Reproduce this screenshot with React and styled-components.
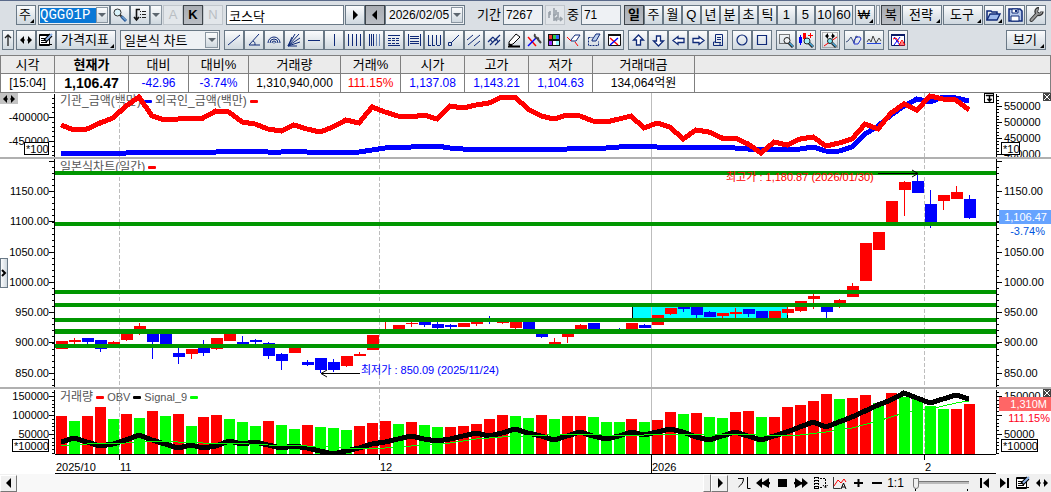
import React from 'react';
import styled, { createGlobalStyle, css } from 'styled-components';

const NAVY = '#0f2a78';
const RED = '#ff0000';
const BLUE = '#0000ff';
const GREEN = '#009600';
const LIME = '#00ff00';

/* ---------- data ---------- */

const quotes = [
  { name: '시각', value: '[15:04]', width: 54 },
  { name: '현재가', value: '1,106.47', width: 74, bold: true },
  { name: '대비', value: '-42.96', width: 60, color: BLUE },
  { name: '대비%', value: '-3.74%', width: 60, color: BLUE },
  { name: '거래량', value: '1,310,940,000', width: 92 },
  { name: '거래%', value: '111.15%', width: 60, color: RED },
  { name: '시가', value: '1,137.08', width: 64, color: BLUE },
  { name: '고가', value: '1,143.21', width: 64, color: BLUE },
  { name: '저가', value: '1,104.63', width: 64, color: BLUE },
  { name: '거래대금', value: '134,064억원', width: 102 },
];

const periods = ['일', '주', '월', 'Q', '년', '분', '초', '틱', '1', '5', '10', '60'];

const drawTools = [
  ['line', '추세선'], ['angle', '각도선'], ['arcs', '피보나치 아크'], ['fan', '피보나치 팬'],
  ['hline', '수평선'], ['vline', '수직선'], ['vlines', '시간대'], ['vlinesDense', '피보나치 시간대'],
  ['rows', '되돌림'], ['rowsFramed', '등분선'], ['cycle', '사이클'], ['segment', '선분'],
  ['parallel', '평행선'], ['hash', '채널'], ['pencil', '펜'], ['cross', '선 설정'],
  ['palette', '색상'], ['eraser', '지우기'], ['eraserAll', '영역 지우기'], ['closeWin', '모두 지우기'],
];
const arrowTools = [['up', '위'], ['down', '아래'], ['left', '왼쪽'], ['right', '오른쪽'], ['note', '메모']];

// canvas y values: body top, body bottom, wick top, wick bottom, r(ise) or f(all)
const candles = [
  [341, 349, 341, 349, 'r'], [340, 342, 338, 344, 'r'], [338, 342, 338, 344, 'f'], [340, 349, 340, 352, 'f'],
  [342, 345, 341, 345, 'r'], [331, 340, 331, 341, 'r'], [326, 331, 323, 335, 'r'], [332, 342, 332, 359, 'f'],
  [332, 345, 332, 345, 'f'], [353, 357, 346, 364, 'f'], [349, 354, 349, 359, 'r'], [347, 353, 340, 356, 'f'],
  [338, 349, 338, 350, 'r'], [333, 341, 333, 341, 'r'], [342, 344, 336, 345, 'f'], [340, 342, 339, 344, 'f'],
  [343, 356, 342, 359, 'f'], [354, 361, 353, 370, 'f'], [347, 353, 346, 353, 'r'], [362, 365, 360, 366, 'f'],
  [358, 370, 358, 373, 'f'], [362, 370, 359, 372, 'f'], [356, 366, 356, 367, 'r'], [354, 356, 352, 356, 'r'],
  [335, 350, 335, 350, 'r'], [330, 332, 321, 332, 'r'], [325, 330, 325, 330, 'r'], [323, 324, 321, 327, 'r'],
  [321, 325, 321, 327, 'f'], [324, 328, 321, 330, 'f'], [325, 327, 324, 330, 'f'], [323, 327, 323, 327, 'r'],
  [320, 324, 320, 326, 'r'], [320, 321, 316, 324, 'f'], [320, 323, 320, 324, 'r'], [320, 328, 320, 330, 'r'],
  [321, 331, 321, 331, 'f'], [332, 337, 332, 338, 'f'], [342, 345, 338, 345, 'r'], [332, 337, 332, 343, 'r'],
  [325, 330, 324, 330, 'r'], [323, 330, 323, 330, 'f'], [330, 332, 330, 332, 'f'], [330, 332, 328, 332, 'f'],
  [323, 330, 323, 330, 'r'], [325, 328, 324, 328, 'f'], [315, 325, 315, 325, 'r'], [308, 314, 308, 315, 'r'],
  [305, 309, 305, 312, 'f'], [305, 315, 305, 318, 'f'], [312, 317, 311, 317, 'f'], [313, 316, 313, 318, 'r'],
  [312, 314, 308, 318, 'r'], [309, 314, 309, 317, 'f'], [311, 319, 311, 319, 'f'], [311, 319, 311, 319, 'r'],
  [309, 313, 307, 315, 'r'], [301, 311, 301, 312, 'r'], [296, 299, 293, 309, 'r'], [306, 312, 306, 318, 'f'],
  [300, 304, 299, 308, 'r'], [286, 297, 283, 297, 'r'], [243, 281, 243, 281, 'r'], [232, 250, 232, 250, 'r'],
  [201, 223, 201, 223, 'r'], [182, 190, 181, 216, 'r'], [181, 193, 173, 193, 'f'], [204, 224, 190, 228, 'f'],
  [195, 201, 195, 210, 'r'], [192, 199, 186, 199, 'r'], [199, 218, 195, 219, 'f'],
];

const volumeTops = [
  416, 421, 416, 407, 419, 414, 418, 411, 416, 414, 426, 417, 415, 419, 422, 426, 421, 425, 429, 425, 427, 428, 430, 426,
  423, 421, 424, 422, 425, 427, 427, 426, 424, 419, 415, 416, 418, 415, 419, 416, 416, 417, 422, 422, 419, 422, 420, 412,
  414, 413, 417, 418, 412, 411, 417, 417, 407, 405, 401, 394, 399, 398, 395, 403, 393, 397, 398, 406, 409, 409, 404,
];
const volumeSigns = 'RGRRGRGRGRGRRGGGRGGRGGGRRRGRGGRRRRRGGRGRRGGGRGRRGRGGRRGRRRRRGRRGRGGGGRR';

const institution = [
  152, 152, 152, 153, 152, 152, 151, 151, 151, 151, 151, 151, 151, 150, 151, 150, 151, 151, 150, 151, 151, 151, 151, 151,
  149, 147, 146, 146, 145, 145, 147, 148, 148, 148, 148, 148, 148, 148, 148, 148, 147, 147, 147, 146, 145, 145, 146, 146,
  146, 146, 146, 146, 147, 148, 148, 148, 148, 148, 146, 150, 150, 146, 133, 125, 114, 105, 98, 101, 96, 97, 100,
];
const foreigner = [
  125, 130, 129, 123, 118, 106, 97, 116, 120, 119, 118, 118, 111, 112, 122, 124, 129, 131, 125, 129, 132, 127, 120, 123,
  107, 112, 116, 117, 115, 119, 106, 108, 105, 103, 97, 97, 109, 116, 119, 115, 116, 121, 122, 119, 116, 128, 123, 127,
  139, 130, 132, 138, 138, 144, 153, 142, 145, 139, 137, 146, 143, 139, 124, 129, 113, 104, 110, 96, 99, 100, 110,
];
const obv = [
  442, 438, 442, 446, 444, 440, 435, 440, 444, 448, 445, 448, 446, 441, 444, 442, 445, 448, 446, 448, 451, 454, 451, 448,
  444, 442, 439, 436, 439, 441, 439, 436, 433, 436, 433, 429, 433, 436, 440, 436, 432, 436, 439, 436, 432, 435, 432, 429,
  432, 437, 440, 436, 432, 436, 440, 436, 432, 427, 422, 427, 422, 417, 411, 405, 400, 393, 398, 403, 399, 395, 399,
];
const signal = [
  [0, 446], [2, 444], [5, 443], [7, 441], [9, 442], [11, 443], [13, 443], [16, 445], [19, 446], [21, 447], [22, 448],
  [25, 448], [27, 446], [30, 443], [32, 439], [34, 437], [36, 436], [39, 434], [41, 434], [43, 436], [45, 435],
  [47, 434], [52, 434], [54, 435], [57, 435], [59, 432], [61, 428], [63, 421], [65, 413], [67, 409], [69, 403], [70, 401],
];

const levels = [[171, 4], [222, 4], [290, 4], [303, 4], [318, 4], [329, 5], [344, 4]];

const AXIS_W = 55;
const slotX = (i) => Math.floor(56.3 + i * 12.97);
const points = (values) => values.map((y, i) => `${slotX(i) + 5},${y}`).join(' ');

/* ---------- icons ---------- */

const s = (color = NAVY, width = 1) => ({ stroke: color, strokeWidth: width, fill: 'none' });

const icons = {
  search: <><circle cx="5.5" cy="5.5" r="3.5" {...s('#333')} fill="#d9f3fa" /><path d="M8 8l2 2" {...s('#333', 2)} /><path d="M9.500 9.500l4.500 4.500" {...s('#2a5a9a', 3)} /><path d="M10 9.500l4 4" {...s('#9fd0f0')} /></>,
  sortList: <><path d="M8 2.500H4.500V13M2 10l2.500 3L7 10" {...s('#111', 1.6)} /><path d="M8 4.500h1M10 4.500h4M8 7.500h1M10 7.500h4M8 10.500h1M10 10.500h4" {...s('#222')} /></>,
  play: <path d="M6 3l5 5-5 5z" fill="#000" />,
  back: <path d="M10 3L5 8l5 5z" fill="#000" />,
  dimBars: <path d="M2 5v6M3 4v4M7 1v13M9 3v5M6 8h3M11 5v6M8 12h7M10 10l-2 2 2 2M13 10l2 2-2 2" {...s('#9aa2aa', 1.6)} />,
  folder: <><path d="M2 13V4h4l1 1h5v3" {...s(NAVY, 1.5)} /><path d="M2 13l3-6h10l-3 6z" {...s(NAVY, 1.3)} fill="#9db9ec" /></>,
  save: <><path d="M2 2h11l2 2v10H2z" {...s(NAVY, 1.5)} fill="#b8caec" /><path d="M5 2v4h6V2z" fill="#fff" stroke={NAVY} /><path d="M9 3v2" {...s(NAVY, 2)} /><path d="M4 14V9h8v5z" fill="#fff" stroke={NAVY} /></>,
  wrench: <><path d="M3.500 13l6-6.500" {...s('#333', 4)} strokeLinecap="round" /><path d="M14 4.500a3 3 0 1 1-3-3" {...s('#333', 3.4)} /><path d="M3.500 13l6-6.500" {...s('#9a9a9a', 2)} strokeLinecap="round" /><path d="M13.500 5a2.600 2.600 0 1 1-3-3" {...s('#9a9a9a', 1.4)} /></>,
  upThin: <path d="M8 14V3M5 6l3-3 3 3" {...s('#222', 1.3)} />,
  leftRight: <><path d="M6 4L2 8l4 4zM10 4l4 4-4 4z" fill="#000" /><path d="M4 8h3M9 8h3" {...s('#000')} /></>,
  sheetPen: <><path d="M1.500 2.500h10v11h-10z" fill="#fff" stroke="#000" /><path d="M2 3.500h9M3 6.500h5M3 8.500h4M3 10.500h6M2 12.500h12" {...s('#000')} /><path d="M7 9l6-6" {...s('#000', 4)} /><path d="M8 8l6-6" {...s('#8fb4e8', 2)} /></>,
  line: <path d="M2 13L14 3" {...s()} />,
  angle: <path d="M13 2L3 13h11M7 9c2 1 2 2 2 4" {...s()} />,
  arcs: <path d="M2 11a6 6 0 0 1 12 0M4 11a4 4 0 0 1 8 0M6 11a2 2 0 0 1 4 0M7.500 11h1" {...s()} />,
  fan: <path d="M2 14L13 2M2 14L9 2M2 14L14 6M2 14l12-4M2 14h9M2 14L6 5" {...s()} />,
  hline: <path d="M2 8.500h12" {...s()} />,
  vline: <path d="M8.500 2v12" {...s()} />,
  vlines: <path d="M2.500 2v12M6.500 2v12M10.500 2v12M14.500 2v12" {...s()} />,
  vlinesDense: <><path d="M3.500 2v12M5.500 2v12M7.500 2v12" {...s()} /><path d="M10.500 2v12M13.500 2v12" {...s('#6b87b5')} /></>,
  rows: <><path d="M2 3.500h12M2 13.500h12" {...s()} /><path d="M2 6.500h12M2 8.500h12M2 11.500h12" {...s()} strokeDasharray="3 1" /></>,
  rowsFramed: <path d="M2.500 2v12M14.500 2v12M4 4.500h9M4 6.500h9M4 9.500h9M4 11.500h9" {...s()} />,
  cycle: <path d="M2.500 3v10M6.500 3v10M10.500 3v10M14.500 3v10M2 13.500h3M6 13.500h3M11 13.500h3" {...s()} />,
  segment: <path d="M5 11l8-8M2.500 10.500h3v3h-3z" {...s()} />,
  parallel: <path d="M1 8l6-5M2 13L14 3M8 14l6-5" {...s()} />,
  hash: <path d="M2 10l5-5M4 13L14 3M9 13l5-5M4 7l3 4M7 5l3 4M10 6l2 4" {...s(NAVY, 1.2)} />,
  pencil: <><path d="M3 10L10 2l4 3-7 7-4 1z" fill="#fff" stroke="#000" /><path d="M2 14.500h12M3 12l3 2" {...s('#000', 2)} /></>,
  cross: <><path d="M2 5l8 9" {...s(RED, 1.4)} /><path d="M2 14L10 6" {...s(BLUE, 1.4)} /><path d="M10 5l5 6M9 2a3 3 0 0 0 4 4" {...s('#444', 2)} /></>,
  palette: <><rect x="2" y="2" width="12" height="12" fill="#111" /><path d="M3 3h3v4H3z" fill="#e33" /><path d="M7 3h3v4H7z" fill="#3c4" /><path d="M10 3h3v4h-3z" fill="#36f" /><path d="M3 9h3v4H3z" fill="#93f" /><path d="M7 9h3v4H7z" fill="#fff" /><path d="M10 9h3v4h-3z" fill="#9ff" /></>,
  eraser: <><path d="M5 8l4-5h5l-4 6H5z" fill="#fff" stroke={NAVY} /><path d="M1 5l4 4M9 10l3 4" {...s(RED)} /></>,
  eraserAll: <><path d="M6 8l4-6h4l-4 7H6z" fill="#bcd0ee" stroke={NAVY} /><path d="M2.500 5.500v8h10v-4M2.500 5.500h4" {...s()} strokeDasharray="2 1" /></>,
  closeWin: <><path d="M2.500 3.500h12v10h-12z" fill="#fff" stroke="#111" /><path d="M2 3h13" {...s('#111', 2)} /><path d="M4 6l8 7" {...s(RED, 1.4)} /><path d="M12 6l-8 7" {...s(BLUE, 1.4)} /></>,
  up: <path d="M8.500 3l5 5h-3v5h-4V8h-3z" {...s(NAVY, 1.3)} fill="#fff" />,
  down: <path d="M8.500 14l5-5h-3V4h-4v5h-3z" {...s(NAVY, 1.3)} fill="#fff" />,
  left: <path d="M3 8.500l5-4v2h6v4H8v2z" {...s(NAVY, 1.3)} fill="#fff" />,
  right: <path d="M14 8.500l-5-4v2H3v4h6v2z" {...s(NAVY, 1.3)} fill="#fff" />,
  note: <path d="M5.500 10V2.500h7v11h-9V10zM10 10v3.500h3M7 5.500h4M7 7.500h4M5 10.500h6" {...s()} />,
  circle: <circle cx="8" cy="8" r="5" {...s(NAVY, 1.2)} />,
  square: <path d="M3.500 3.500h9v9h-9z" {...s(NAVY, 1.2)} />,
  zoomArea: <><path d="M1.500 2.500h10v9h-10z" {...s('#000')} strokeDasharray="1 1" /><circle cx="9" cy="8.500" r="3" fill="#eef1f4" stroke="#222" /><path d="M11 11l4 4" {...s('#222', 3)} /><path d="M11.500 11l3.500 3.500" {...s('#4aa6d8', 1.6)} /></>,
  zoomCandle: <><path d="M1 5h3v6H1zM2 3h1v10H2z" fill={BLUE} /><path d="M5 1h3v6H5zM10 3h5v1h-5zM12 1h1v5h-1z" fill={RED} /><circle cx="9" cy="9" r="3" fill="#a8f0f8" stroke="#222" /><path d="M11 11l4 4" {...s('#222', 3)} /><path d="M11.500 11l3.500 3.500" {...s('#4aa6d8', 1.6)} /></>,
  zoomFit: <><path d="M.5.500h15v15H.5z" {...s('#777')} strokeDasharray="1 1" /><path d="M6 1L3 4l3 3zM10 1l3 3-3 3z" fill="#000" /><path d="M4 4h3M9 4h3" {...s('#000')} /><path d="M2 14L15 5" {...s(RED)} /><circle cx="8" cy="9" r="2.500" fill="#7fe8f4" stroke="#222" /><path d="M10 11l4 4" {...s('#222', 2.600)} /><path d="M10.500 11l3.500 3.500" {...s('#4aa6d8', 1.4)} /></>,
  waveEdit: <><path d="M0 10l2-1 3-4 3 6 2-7 2 1" {...s('#3c4f7c')} /><path d="M8 12V8l3-3h3l1 2-3 5z" {...s('#2233cc')} /></>,
  wave: <><path d="M1 10l2-3 2 3 2-6 3 7 3-5 2 3" {...s('#444')} /><path d="M1 11.500h14" {...s('#2244dd')} /></>,
  winChart: <><path d="M1.500 2.500h13v11h-13z" fill="#fff" stroke="#0a1c66" /><path d="M1 3h14" {...s('#0a1c66', 2)} /><path d="M4 5l6 8M10 5l-6 8" {...s(BLUE)} /><path d="M3 7l3-1 3 4M9 13l3-5 3 5zM10 11h4" {...s(RED)} /></>,
  tick: <path d="M2 3.500h5.500c0 4-2 6-5 8.500M11.500 2v11.500h3" {...s('#000')} />,
  rewind: <path d="M7 3L1 8l6 5V9.500h1L14 13V9.200h1V7h-1V3L8 7H7z" fill="#000" />,
  stop: <rect x="4" y="4" width="9" height="8" fill="#000" />,
  forward: <path d="M9 3l6 5-6 5V9.500H8L2 13V9.200H1V7h1V3l6 4h1z" fill="#000" />,
  gridIcon: <><path d="M2.500 2v12M6.500 2v12" {...s('#000')} strokeDasharray="2 1" /><path d="M2 2.500h5M2 5.500h5M2 8.500h5M2 11.500h5M2 13.500h5" {...s('#000')} /><path d="M8 3.500h5.500V12M11 10l2.500 3 2-3M8 12.500h3" {...s('#000')} strokeDasharray="2 1" /></>,
  chartA: <><path d="M2.500 2v11.500h7" {...s('#333')} /><path d="M3 11l4-6 3 3 3-4 2 3" {...s(RED)} /><path d="M10 14l2.500-6 2.500 6M11 12h3" {...s('#000')} /></>,
  plus: <path d="M4 8h9M8.500 4v8" {...s('#000', 2)} />,
  minus: <path d="M3 8h10" {...s('#000', 2)} />,
  first: <path d="M3 3h2v10H3zM12 3v10L6 8z" fill="#000" />,
  last: <path d="M11 3h2v10h-2zM4 3v10l6-5z" fill="#000" />,
  chevron: <path d="M6 5l3 3-3 3" {...s('#000', 2)} />,
};

const Icon = ({ name }) => (
  <svg width="16" height="16" viewBox="0 0 16 16" aria-hidden="true">{icons[name]}</svg>
);

const ToolButton = ({ icon, label, ...rest }) => (
  <Button type="button" aria-label={label} title={label} {...rest}><Icon name={icon} /></Button>
);

/* ---------- chart parts ---------- */

const Axis = ({ side, top, height, majors, step, from, unit, unitY }) => {
  const left = side === 'left';
  const minors = [];
  for (let y = majors[0][0]; y > from; y -= step) minors.push(Math.round(y));
  for (let y = majors[0][0] + step; y < top + height; y += step) minors.push(Math.round(y));
  const boxW = unit.length * 6 + 1;
  const boxX = left ? 49 - boxW : 5;
  return (
    <AxisSvg width={AXIS_W} height={height}>
      <g transform={`translate(0 ${-top})`}>
        <rect x={left ? 54 : 0} y={from} width="1" height={top + height - from} />
        {minors.map((y) => <rect key={y} x={left ? 52 : 1} y={y} width="2" height="1" />)}
        {majors.map(([y, label]) => (
          <React.Fragment key={y}>
            <rect x={left ? 49 : 1} y={y} width="5" height="1" />
            {label && <text x={left ? 49 : 8} y={y + 4} textAnchor={left ? 'end' : 'start'}>{label}</text>}
          </React.Fragment>
        ))}
        {unitY && (
          <>
            <rect x={boxX + 0.5} y={unitY + 0.5} width={boxW - 1} height="12" fill="#fff" stroke="#000" />
            <text x={boxX + 2} y={unitY + 11}>{unit}</text>
          </>
        )}
      </g>
    </AxisSvg>
  );
};

const Guides = ({ from, to }) => (
  <g fill="none" stroke="#bdbdbd">
    {[119, 379, 924].map((x) => (
      <path key={x} d={`M${x + 0.5} ${from}V${to}`} strokeDasharray="4 2" />
    ))}
    <path d={`M651.5 ${from}V${to}`} />
  </g>
);

const Plot = ({ top, height, children }) => (
  <PlotSvg width="100%" height={height}>
    <g transform={`translate(${-AXIS_W} ${-top})`}>
      <Guides from={top} to={top + height} />
      {children}
    </g>
  </PlotSvg>
);

const Legend = ({ items }) => (
  <LegendRow>
    {items.map(([label, color, latin]) => (
      <LegendItem key={label} $latin={latin}>{label}<Swatch $color={color} /></LegendItem>
    ))}
  </LegendRow>
);

const FlowPanel = () => (
  <Panel>
    <Axis side="left" top={93} from={94} height={64} step={4.8}
      majors={[[117, '-400000'], [141, '-450000']]} unit="*100" unitY={142} />
    <PlotArea>
      <Legend items={[['기관_금액(백만)', BLUE], ['외국인_금액(백만)', RED]]} />
      <Plot top={93} height={64}>
        <polyline points={points(institution)} stroke={BLUE} strokeWidth="5" fill="none" transform="translate(0 1)" shapeRendering="crispEdges" />
        <polyline points={points(foreigner)} stroke={RED} strokeWidth="5" fill="none" shapeRendering="crispEdges" />
      </Plot>
      <DownButton type="button" aria-label="내리기">
        <svg width="9" height="9" viewBox="0 0 9 9"><path d="M1 1h7v1H1zM4 2h1v3h2L4.500 8 2 5h2z" fill="#000" stroke="#000" strokeWidth=".5" /></svg>
      </DownButton>
    </PlotArea>
    <Axis side="right" top={93} from={94} height={64} step={3.2}
      majors={[[106, '550000'], [122, '500000'], [138, '450000'], [154, '400000']]} unit="*10" unitY={142} />
    <MoveHandle type="button" aria-label="이동"><Icon name="leftRight" /></MoveHandle>
    <CloseButton type="button" aria-label="닫기"><CloseMark /></CloseButton>
  </Panel>
);

const priceMajors = [[161, ''], [191, '1150.00'], [221, '1100.00'], [252, '1050.00'], [282, '1000.00'], [312, '950.00'], [342, '900.00'], [373, '850.00']];
const volumeMajors = [[396, '150000'], [415, '100000'], [434, '50000']];

// the value tag takes the place of this label on the right axis
const without = (majors, hidden) => majors.map(([y, label]) => [y, label === hidden ? '' : label]);

const PricePanel = () => (
  <Panel>
    <Axis side="left" top={159} from={159} height={228} step={6.05} majors={priceMajors} unit="" />
    <PlotArea>
      <Legend items={[['일본식차트(일간)', RED]]} />
      <Plot top={159} height={228}>
        <g shapeRendering="crispEdges">
          <rect x="632" y="305" width="156" height="15" fill="#000" />
          <rect x="633" y="306" width="154" height="13" fill="#00ffff" />
          <rect x="651" y="306" width="1" height="13" fill="#bdbdbd" />
          {candles.map(([top, bottom, high, low, dir], i) => (
            <g key={i} fill={dir === 'r' ? RED : BLUE}>
              <rect x={slotX(i)} y={top} width="12" height={bottom - top} />
              <rect x={slotX(i) + 5} y={high} width="1" height={low - high} />
            </g>
          ))}
          {levels.map(([y, h]) => <rect key={y} x={AXIS_W} y={y} width="100%" height={h} fill={GREEN} />)}
        </g>
        <path d="M878 173.500h40M912 170l6 3.500-6 3.500M360 373.500h-39M327 370l-6 3.500 6 3.500" stroke="#000" fill="none" />
        <Note x="726" y="181" fill={RED}>최고가 : 1,180.87 (2026/01/30)</Note>
        <Note x="361" y="374" fill={BLUE}>최저가 : 850.09 (2025/11/24)</Note>
      </Plot>
    </PlotArea>
    <Axis side="right" top={159} from={159} height={228} step={6.05} majors={without(priceMajors, '1100.00')} unit="" />
    <ValueTag $top={51} $bg="#66a3ff" $color="#0055dd" $inset={6}><b>1,106.47</b><span>-3.74%</span></ValueTag>
    <SideTab type="button" aria-label="펼치기"><Icon name="chevron" /></SideTab>
  </Panel>
);

const VolumePanel = () => (
  <Panel>
    <Axis side="left" top={389} from={390} height={65} step={3.8} majors={volumeMajors} unit="*10000" unitY={439} />
    <PlotArea>
      <Legend items={[['거래량', RED], ['OBV', '#000', true], ['Signal_9', LIME, true]]} />
      <Plot top={389} height={65}>
        <g shapeRendering="crispEdges">
          {volumeTops.map((y, i) => (
            <rect key={i} x={slotX(i)} y={y} width="11" height={454 - y} fill={volumeSigns[i] === 'R' ? RED : LIME} />
          ))}
        </g>
        <polyline points={points(obv)} stroke="#000" strokeWidth="5" fill="none" shapeRendering="crispEdges" />
        <polyline points={signal.map(([i, y]) => `${slotX(i) + 5},${y}`).join(' ')} stroke={LIME} fill="none" shapeRendering="crispEdges" />
      </Plot>
    </PlotArea>
    <Axis side="right" top={389} from={390} height={65} step={3.8} majors={without(volumeMajors, '100000')} unit="*10000" unitY={439} />
    <ValueTag $top={8} $bg="#ff6666" $color="#ff0022" $inset={1}><b>1,310M</b><span>111.15%</span></ValueTag>
    <CloseButton type="button" aria-label="닫기"><CloseMark /></CloseButton>
  </Panel>
);

const CloseMark = () => (
  <svg width="8" height="8" viewBox="0 0 8 8"><path d="M1 1l6 6M7 1L1 7" stroke="#fff" /></svg>
);

const DateAxis = () => (
  <DateRow>
    <svg width="100%" height="20">
      <g transform={`translate(${-AXIS_W} -454)`} shapeRendering="crispEdges">
        <rect x="55" y="454" width="100%" height="1" />
        <rect x="55" y="473" width="100%" height="1" />
        {[119, 379, 924].map((x) => <rect key={x} x={x} y="455" width="1" height="5" />)}
        <rect x="651" y="455" width="1" height="18" />
        <text x="56" y="471">2025/10</text>
        <text x="120" y="471">11</text>
        <text x="380" y="471">12</text>
        <text x="652" y="471">2026</text>
        <text x="925" y="471">2</text>
      </g>
    </svg>
  </DateRow>
);

/* ---------- page ---------- */

const App = () => (
  <Page>
    <GlobalStyle />
    <Toolbar>
      <ToolRow $indent={16}>
        <Group>
          <Button type="button" $menu>주</Button>
        </Group>
        <Group $gap={2}>
          <Combo $width={72}>
            <CodeInput aria-label="종목코드" defaultValue="QGG01P" />
            <DropButton type="button" aria-label="종목 목록" />
          </Combo>
          <ToolButton icon="search" label="검색" />
          <ToolButton icon="sortList" label="목록" />
          <DropButton type="button" aria-label="목록 열기" $tall />
        </Group>
        <Group $gap={1}>
          <Button type="button" disabled>A</Button>
          <Button type="button" $active $bold>K</Button>
          <Button type="button" disabled>N</Button>
        </Group>
        <Group $gap={3}>
          <Field $width={118} aria-label="종목명" defaultValue="코스닥" />
        </Group>
        <Group $gap={1}>
          <ToolButton icon="play" label="다음" />
          <ToolButton icon="back" label="이전" $active />
          <Combo $width={80}>
            <DateInput aria-label="날짜" defaultValue="2026/02/05" />
            <DropButton type="button" aria-label="달력" />
          </Combo>
        </Group>
        <Group $gap={12}>
          <Label htmlFor="span">기간</Label>
          <Field id="span" $width={40} $grey defaultValue="7267" />
        </Group>
        <Group $gap={2}>
          <ToolButton icon="dimBars" label="봉 간격" disabled />
        </Group>
        <Group $gap={2}>
          <Label htmlFor="count">중</Label>
          <Field id="count" $width={40} $grey defaultValue="71" />
        </Group>
        <Group $gap={3}>
          {periods.map((name, i) => (
            <Button type="button" key={name} $width={i ? 19 : 20} $active={!i} $bold={!i}>{name}</Button>
          ))}
        </Group>
        <Group $gap={2}>
          <Button type="button" $menu>₩</Button>
          <Sliver />
        </Group>
        <Group $gap={1}><Button type="button" $active>복</Button></Group>
        <Group $gap={1}><Button type="button" $width={40} $menu>전략</Button></Group>
        <Group $gap={1}><Button type="button" $width={40} $menu>도구</Button></Group>
        <Group $gap={1}><ToolButton icon="folder" label="열기" $menu /></Group>
        <Group $gap={1}><ToolButton icon="save" label="저장" /></Group>
        <Group $gap={1}><ToolButton icon="wrench" label="설정" /></Group>
      </ToolRow>
      <ToolRow $indent={2}>
        <Group><ToolButton icon="upThin" label="위로" $width={12} /></Group>
        <Group $gap={2}>
          <ToolButton icon="leftRight" label="좌우" />
          <ToolButton icon="sheetPen" label="편집" />
          <Button type="button" $width={60} $menu>가격지표</Button>
        </Group>
        <Group $gap={4}>
          <SelectBox>
            <select aria-label="차트 종류"><option>일본식 차트</option></select>
            <SelectArrow />
          </SelectBox>
        </Group>
        <Group $gap={4}>
          {drawTools.map(([icon, label]) => <ToolButton key={icon} icon={icon} label={label} />)}
        </Group>
        <Group $gap={4}>
          {arrowTools.map(([icon, label]) => <ToolButton key={icon} icon={icon} label={label} />)}
        </Group>
        <Group $gap={4}>
          <ToolButton icon="circle" label="원" />
          <ToolButton icon="square" label="사각형" />
        </Group>
        <Group $gap={4}>
          <ToolButton icon="zoomArea" label="영역 확대" />
          <ToolButton icon="zoomCandle" label="봉 확대" />
        </Group>
        <Group $gap={4}><ToolButton icon="zoomFit" label="전체 보기" /></Group>
        <Group $gap={4}>
          <ToolButton icon="waveEdit" label="파동 편집" />
          <ToolButton icon="wave" label="파동" />
        </Group>
        <Group $gap={4}><ToolButton icon="winChart" label="차트 창" /></Group>
        <Group $push><Button type="button" $width={40} $menu>보기</Button></Group>
      </ToolRow>
    </Toolbar>

    <QuoteTable>
      <colgroup>
        {quotes.map((q) => <col key={q.name} width={q.width} />)}
        <col />
      </colgroup>
      <thead>
        <tr>{quotes.map((q) => <Head key={q.name} $bold={q.bold}>{q.name}</Head>)}<Head as="td" /></tr>
      </thead>
      <tbody>
        <tr>{quotes.map((q) => <Cell key={q.name} $bold={q.bold} $color={q.color}>{q.value}</Cell>)}<Cell /></tr>
      </tbody>
    </QuoteTable>

    <main>
      <FlowPanel />
      <Divider />
      <PricePanel />
      <Divider />
      <VolumePanel />
      <DateAxis />
    </main>

    <BottomBar>
      <ScrollButton type="button" aria-label="왼쪽으로"><Icon name="back" /></ScrollButton>
      <Track><Thumb /></Track>
      <ScrollButton type="button" aria-label="오른쪽으로"><Icon name="play" /></ScrollButton>
      <BarTools>
        <FlatButton type="button" aria-label="기준"><Icon name="tick" /></FlatButton>
        <FlatButton type="button" aria-label="뒤로 재생"><Icon name="rewind" /></FlatButton>
        <FlatButton type="button" aria-label="정지"><Icon name="stop" /></FlatButton>
        <FlatButton type="button" aria-label="앞으로 재생"><Icon name="forward" /></FlatButton>
        <FlatButton type="button" aria-label="격자"><Icon name="gridIcon" /></FlatButton>
        <FlatButton type="button" aria-label="자동"><Icon name="chartA" /></FlatButton>
        <FlatButton type="button" aria-label="확대"><Icon name="plus" /></FlatButton>
        <FlatButton type="button" aria-label="축소"><Icon name="minus" /></FlatButton>
        <FlatButton type="button">1:1</FlatButton>
      </BarTools>
      <Slider type="range" aria-label="배율" min="0" max="100" defaultValue="0" />
      <BarTools>
        <FlatButton type="button" aria-label="처음"><Icon name="first" /></FlatButton>
        <FlatButton type="button" aria-label="마지막"><Icon name="last" /></FlatButton>
        <FlatButton type="button" aria-label="편집"><Icon name="sheetPen" /></FlatButton>
        <FlatButton type="button" aria-label="좌우"><Icon name="leftRight" /></FlatButton>
      </BarTools>
    </BottomBar>
  </Page>
);

export default App;

/* ---------- styles ---------- */

const GlobalStyle = createGlobalStyle`
  * { box-sizing: border-box; }
  body {
    margin: 0;
    background: #fff;
  }
  body, button, input, select {
    font-family: "Liberation Sans", "Noto Sans CJK KR", sans-serif;
    font-size: 12px;
    color: #000;
  }
  svg { display: block; flex-shrink: 0; }
`;

const Page = styled.div`
  display: flex;
  flex-direction: column;
  overflow: hidden;
`;

const Toolbar = styled.header`
  display: flex;
  flex-direction: column;
  gap: 5px;
  padding: 4px 5px 5px 0;
  border-top: 1px solid #5a6a8a;
  background: #dadfe4;
`;

const ToolRow = styled.div`
  display: flex;
  height: 20px;
  padding-left: ${({ $indent }) => $indent}px;
`;

const Group = styled.div`
  display: flex;
  align-items: center;
  flex-shrink: 0;
  margin-left: ${({ $gap, $push }) => ($push ? 'auto' : `${$gap || 0}px`)};
`;

const Button = styled.button`
  position: relative;
  display: flex;
  align-items: center;
  justify-content: center;
  flex-shrink: 0;
  width: ${({ $width }) => $width || 20}px;
  height: 20px;
  padding: 0;
  overflow: hidden;
  border: 1px solid #6a7986;
  background: linear-gradient(#fbfcfd, #dfe5ea 60%, #cfd8df);
  font-size: 13px;
  font-weight: ${({ $bold }) => ($bold ? 700 : 400)};
  line-height: 16px;
  white-space: nowrap;
  ${({ $active }) => $active && css`
    border-color: #3d444a;
    background: linear-gradient(#a9adb3, #b9bdc3);
  `}
  ${({ $menu }) => $menu && css`
    padding-right: 2px;
    &::after {
      content: '';
      position: absolute;
      right: 1px;
      bottom: 1px;
      border: 2px solid;
      border-color: transparent #000 #000 transparent;
    }
  `}
  &:disabled {
    border-color: #c0c6cc;
    background: #e2e6ea;
    color: #b9bec3;
  }
`;

const Sliver = styled.span`
  width: 4px;
  height: 20px;
  margin-left: 1px;
  border: 1px solid #8a96a1;
  background: #eef1f4;
`;

const Combo = styled.div`
  display: flex;
  align-items: center;
  width: ${({ $width }) => $width}px;
  height: 20px;
  padding: 1px;
  border: 1px solid #6a7986;
  background: #eef1f4;
`;

const CodeInput = styled.input`
  flex: 1;
  min-width: 0;
  height: 15px;
  padding: 0;
  border: 0;
  background: #0a78d6;
  color: #fff;
  font-family: "Liberation Mono", monospace;
  font-size: 14px;
`;

const DateInput = styled.input`
  flex: 1;
  min-width: 0;
  padding: 0 0 0 2px;
  border: 0;
  background: none;
`;

const arrow = css`
  content: '';
  border: 4px solid transparent;
  border-top-color: #5c666f;
  border-bottom: 0;
`;

const DropButton = styled.button`
  display: flex;
  align-items: center;
  justify-content: center;
  flex-shrink: 0;
  width: 12px;
  height: ${({ $tall }) => ($tall ? 20 : 16)}px;
  padding: 0;
  border: 1px solid #8a96a1;
  background: linear-gradient(#fbfcfd, #cfd8df);
  &::after { ${arrow} }
`;

const Field = styled.input`
  width: ${({ $width }) => $width}px;
  height: 20px;
  padding: 0 2px;
  border: 1px solid #6a7986;
  background: ${({ $grey }) => ($grey ? '#eef1f4' : '#fff')};
  font-size: ${({ $grey }) => ($grey ? 12 : 13)}px;
`;

const Label = styled.label`
  padding-right: 2px;
  font-size: 13px;
  line-height: 20px;
`;

const SelectBox = styled.div`
  position: relative;
  select {
    display: block;
    width: 100px;
    height: 20px;
    padding: 0 16px 0 3px;
    border: 1px solid #6a7986;
    border-radius: 0;
    background: #eef1f4;
    font-size: 13px;
    appearance: none;
  }
`;

const SelectArrow = styled.span`
  position: absolute;
  top: 2px;
  right: 2px;
  display: flex;
  align-items: center;
  justify-content: center;
  width: 13px;
  height: 16px;
  border: 1px solid #8a96a1;
  background: linear-gradient(#fbfcfd, #cfd8df);
  pointer-events: none;
  &::after { ${arrow} }
`;

const QuoteTable = styled.table`
  width: 100%;
  table-layout: fixed;
  border-spacing: 0;
  border: solid #7f7f7f;
  border-width: 1px 0 0 1px;
`;

const cell = css`
  padding: 0;
  border: solid #7f7f7f;
  border-width: 0 1px 1px 0;
  text-align: center;
  white-space: nowrap;
`;

const Head = styled.th`
  ${cell}
  height: 18px;
  background: #ebebeb;
  font-size: 13px;
  font-weight: ${({ $bold }) => ($bold ? 700 : 400)};
  line-height: 17px;
`;

const Cell = styled.td`
  ${cell}
  height: 19px;
  color: ${({ $color }) => $color || '#000'};
  font-size: ${({ $bold }) => ($bold ? 14 : 12)}px;
  font-weight: ${({ $bold }) => ($bold ? 700 : 400)};
  line-height: 18px;
`;

const Panel = styled.section`
  position: relative;
  display: grid;
  grid-template-columns: 55px 1fr 55px;
  background: #fff;
`;

const PlotArea = styled.div`
  position: relative;
  min-width: 0;
`;

const AxisSvg = styled.svg`
  shape-rendering: crispEdges;
  font-size: 11px;
`;

// sits above the legend, so the series run over its text
const PlotSvg = styled.svg`
  position: relative;
  overflow: hidden;
`;

const Note = styled.text`
  font-size: 11px;
`;

const LegendRow = styled.div`
  position: absolute;
  top: 0;
  left: 5px;
  display: flex;
  gap: 3px;
  color: #555;
`;

const LegendItem = styled.span`
  display: flex;
  align-items: center;
  gap: 3px;
  font-size: ${({ $latin }) => ($latin ? 11 : 12)}px;
  line-height: 16px;
`;

const Swatch = styled.i`
  width: 8px;
  height: 3px;
  border-radius: 1px;
  background: ${({ $color }) => $color};
`;

const overlayButton = css`
  position: absolute;
  top: 0;
  display: flex;
  align-items: center;
  justify-content: center;
  padding: 0;
  border: 0;
`;

const DownButton = styled.button`
  ${overlayButton}
  right: 2px;
  width: 10px;
  height: 10px;
  outline: 1px solid #000;
  outline-offset: -1px;
  background: #fff;
`;

const CloseButton = styled.button`
  ${overlayButton}
  right: 0;
  width: 8px;
  height: 8px;
  background: #444;
`;

const MoveHandle = styled.button`
  ${overlayButton}
  left: 0;
  width: 18px;
  height: 11px;
  overflow: hidden;
  background: #c3c3c3;
`;

const SideTab = styled.button`
  ${overlayButton}
  top: 99px;
  left: 0;
  width: 8px;
  height: 30px;
  overflow: hidden;
  border: 1px solid #6a7986;
  background: linear-gradient(90deg, #fbfcfd, #cfd8df);
`;

const ValueTag = styled.div`
  position: absolute;
  top: ${({ $top }) => $top}px;
  right: 0;
  display: flex;
  flex-direction: column;
  width: 52px;
  color: ${({ $color }) => $color};
  font-size: 11px;
  line-height: 14px;
  text-align: right;
  b {
    padding-right: 4px;
    background: ${({ $bg }) => $bg};
    color: #fff;
    font-weight: 400;
  }
  span {
    padding-right: ${({ $inset }) => $inset}px;
  }
`;

const Divider = styled.div`
  height: 2px;
  background: #b0b0b0;
`;

const DateRow = styled.div`
  height: 20px;
  padding: 0 55px;
  font-size: 11px;
`;

const BottomBar = styled.footer`
  display: flex;
  align-items: center;
  height: 18px;
  background: #f0f0f0;
`;

const ScrollButton = styled.button`
  display: flex;
  align-items: center;
  justify-content: center;
  width: 17px;
  height: 17px;
  padding: 0;
  border: 1px solid;
  border-color: #fff #777 #777 #fff;
  background: #f0f0f0;
`;

const Track = styled.div`
  display: flex;
  flex: 1;
  justify-content: flex-end;
  height: 18px;
  background: #f8f8f8;
`;

const Thumb = styled.span`
  width: 8px;
  border: 1px solid;
  border-color: #fff #777 #777 #fff;
  background: #f0f0f0;
`;

const BarTools = styled.div`
  display: flex;
  align-items: center;
  padding-left: 6px;
`;

const FlatButton = styled.button`
  display: flex;
  align-items: center;
  justify-content: center;
  width: 19px;
  height: 18px;
  padding: 0;
  border: 0;
  background: none;
  white-space: nowrap;
`;

const Slider = styled.input`
  width: 56px;
  height: 16px;
  margin: 0 0 0 8px;
  appearance: none;
  background:
    linear-gradient(#777, #777) 0 6px / 100% 1px no-repeat,
    linear-gradient(#bbb, #bbb) 0 7px / 100% 2px no-repeat,
    linear-gradient(#000, #000) 2px 100% / 1px 2px no-repeat,
    linear-gradient(#000, #000) 54px 100% / 1px 2px no-repeat;
  &::-webkit-slider-thumb {
    appearance: none;
    width: 6px;
    height: 11px;
    border: 1px solid #777;
    border-radius: 0 0 3px 3px;
    background: #f0f0f0;
  }
`;
